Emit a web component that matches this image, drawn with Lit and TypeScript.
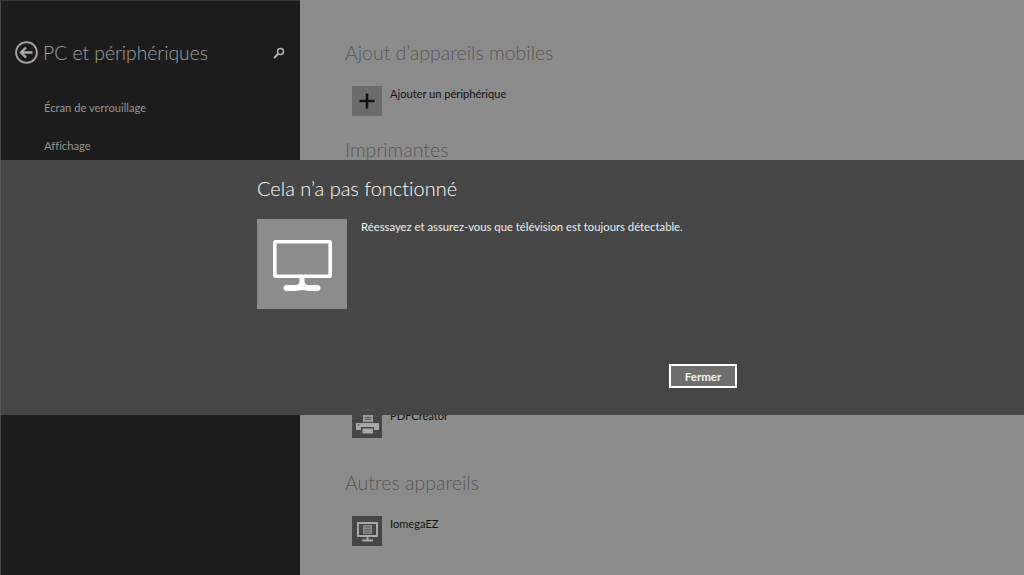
import { LitElement, html, css } from "lit";
import { customElement } from "lit/decorators.js";

@customElement("app-root")
export class AppRoot extends LitElement {
  static styles = css`
    :host {
      display: block;
      position: relative;
      width: 1024px;
      height: 575px;
      overflow: hidden;
      font-family: Lato, Roboto, sans-serif;
      font-variant-ligatures: none;
      background: #8c8c8c;
    }

    .page {
      display: flex;
      height: 100%;
    }

    .side {
      width: 300px;
      background: #1c1c1c;
      box-sizing: border-box;
      border-top: 1px solid #3a3a3a;
      border-left: 1px solid #4a4a4a;
      padding-top: 40px;
    }

    .side-head {
      display: flex;
      align-items: center;
      height: 23px;
      padding: 0 15px 0 14px;
      gap: 5px;
    }

    .side-head h1 {
      flex: 1;
      margin: 0;
      font-size: 19.3px;
      font-weight: 300;
      color: #a0a0a0;
      white-space: nowrap;
    }

    .side-nav {
      display: flex;
      flex-direction: column;
      gap: 22px;
      padding: 36px 0 0 43px;
      font-size: 11.2px;
      line-height: 16px;
      color: #959595;
    }

    .main {
      flex: 1;
      padding: 39px 0 0 45px;
    }

    .main h2 {
      margin: 0;
      font-size: 19.5px;
      line-height: 27px;
      font-weight: 300;
      color: #555;
      white-space: nowrap;
    }

    .main h2.printers { margin-top: 20px; }
    .main h2.others { margin-top: 31px; }

    .device {
      display: flex;
      gap: 8px;
      margin: 20px 0 0 7px;
      color: #111;
      font-size: 11.1px;
      line-height: 16px;
    }

    .device.pdf { margin-top: 245px; }

    .tile {
      width: 30px;
      height: 30px;
      display: flex;
      align-items: center;
      justify-content: center;
    }

    .tile.plus { background: #6c6c6c; }
    .tile.dark { background: #464646; }

    .dialog {
      position: absolute;
      left: 0;
      top: 160px;
      width: 100%;
      height: 255px;
      background: #464646;
      box-sizing: border-box;
      border-left: 1px solid #5a5a5a;
      padding: 15px 287px 0 256px;
      display: flex;
      flex-direction: column;
    }

    .dialog h3 {
      margin: 0;
      font-size: 20px;
      line-height: 26px;
      font-weight: 300;
      color: #fff;
      white-space: nowrap;
    }

    .dialog-body {
      display: flex;
      gap: 14px;
      margin-top: 18px;
    }

    .big-tile {
      width: 90px;
      height: 90px;
      background: #8c8c8c;
    }

    .big-tile svg { display: block; }

    .msg {
      font-size: 11.3px;
      line-height: 16px;
      color: #f0f0f0;
      white-space: nowrap;
    }

    .actions {
      display: flex;
      justify-content: flex-end;
      margin-top: 55px;
    }

    button {
      width: 68px;
      height: 24px;
      box-sizing: border-box;
      border: 2px solid #fff;
      background: #6e6e6e;
      color: #f2f2f2;
      font: 700 11.5px Lato, Roboto, sans-serif;
      padding: 0;
    }
  `;

  render() {
    return html`
      <div class="page">
        <aside class="side">
          <div class="side-head">
            <svg width="23" height="23" viewBox="0 0 23 23" fill="none" stroke="#a8a8a8" stroke-width="1.8">
              <circle cx="11.5" cy="11.5" r="10.400"></circle>
              <path d="M6 11.500h11.500M11 6.500l-5 5 5 5" stroke-width="2.400"></path>
            </svg>
            <h1>PC et périphériques</h1>
            <svg width="12" height="12" viewBox="0 0 12 12" fill="none" stroke="#b4b4b4">
              <circle cx="7.500" cy="4.500" r="3" stroke-width="1.500"></circle>
              <path d="M5.200 6.800L1 11" stroke-width="2"></path>
            </svg>
          </div>
          <nav class="side-nav">
            <div>Écran de verrouillage</div>
            <div>Affichage</div>
          </nav>
        </aside>
        <main class="main">
          <h2>Ajout d’appareils mobiles</h2>
          <div class="device">
            <div class="tile plus">
              <svg width="16" height="16" viewBox="0 0 16 16"><path d="M6.700 0.500h2.600v6.200h6.200v2.600H9.300v6.200H6.700V9.300H0.500V6.700h6.200z" fill="#111"></path></svg>
            </div>
            <span>Ajouter un périphérique</span>
          </div>
          <h2 class="printers">Imprimantes</h2>
          <div class="device pdf">
            <div class="tile dark">
              <svg width="30" height="30" viewBox="0 0 30 30">
                <path d="M11 7h10v7H11z" fill="#9a9a9a"></path>
                <path d="M13 9.500h6M13 11.500h6" stroke="#5a5a5a"></path>
                <path d="M4 15h23v7h-5v-3H9v3H4z" fill="#a8a8a8"></path>
                <path d="M10.500 20.500h10.500v5H10.500z" fill="#a8a8a8"></path>
                <circle cx="6.500" cy="17" r="0.800" fill="#464646"></circle>
              </svg>
            </div>
            <span>PDFCreator</span>
          </div>
          <h2 class="others">Autres appareils</h2>
          <div class="device">
            <div class="tile dark">
              <svg width="30" height="30" viewBox="0 0 30 30" fill="none" stroke="#a8a8a8">
                <path d="M6 7h19v13H6z" stroke-width="2"></path>
                <path d="M11 9h9v9h-9z" fill="#8c8c8c" stroke="none"></path>
                <path d="M12.500 11h6M12.500 13.500h6M12.500 16h6" stroke="#5a5a5a"></path>
                <path d="M15.500 21v3.500M10 24.500h11" stroke-width="2"></path>
              </svg>
            </div>
            <span>IomegaEZ</span>
          </div>
        </main>
      </div>
      <section class="dialog">
        <h3>Cela n’a pas fonctionné</h3>
        <div class="dialog-body">
          <div class="big-tile">
            <svg width="90" height="90" viewBox="0 0 90 90">
              <rect x="17.800" y="22.800" width="55.400" height="34.400" rx="1" fill="none" stroke="#fff" stroke-width="3.600"></rect>
              <path d="M42.500 59h5v3c0 3 2 4 5 4h8c2 0 3 1.500 3 3s-1 3-3 3h-8c-3 0-5-1-7.500-1s-4.500 1-7.500 1h-8c-2 0-3-1.500-3-3s1-3 3-3h8c3 0 5-1 5-4z" fill="#fff"></path>
            </svg>
          </div>
          <div class="msg">Réessayez et assurez-vous que télévision est toujours détectable.</div>
        </div>
        <div class="actions"><button>Fermer</button></div>
      </section>
    `;
  }
}
